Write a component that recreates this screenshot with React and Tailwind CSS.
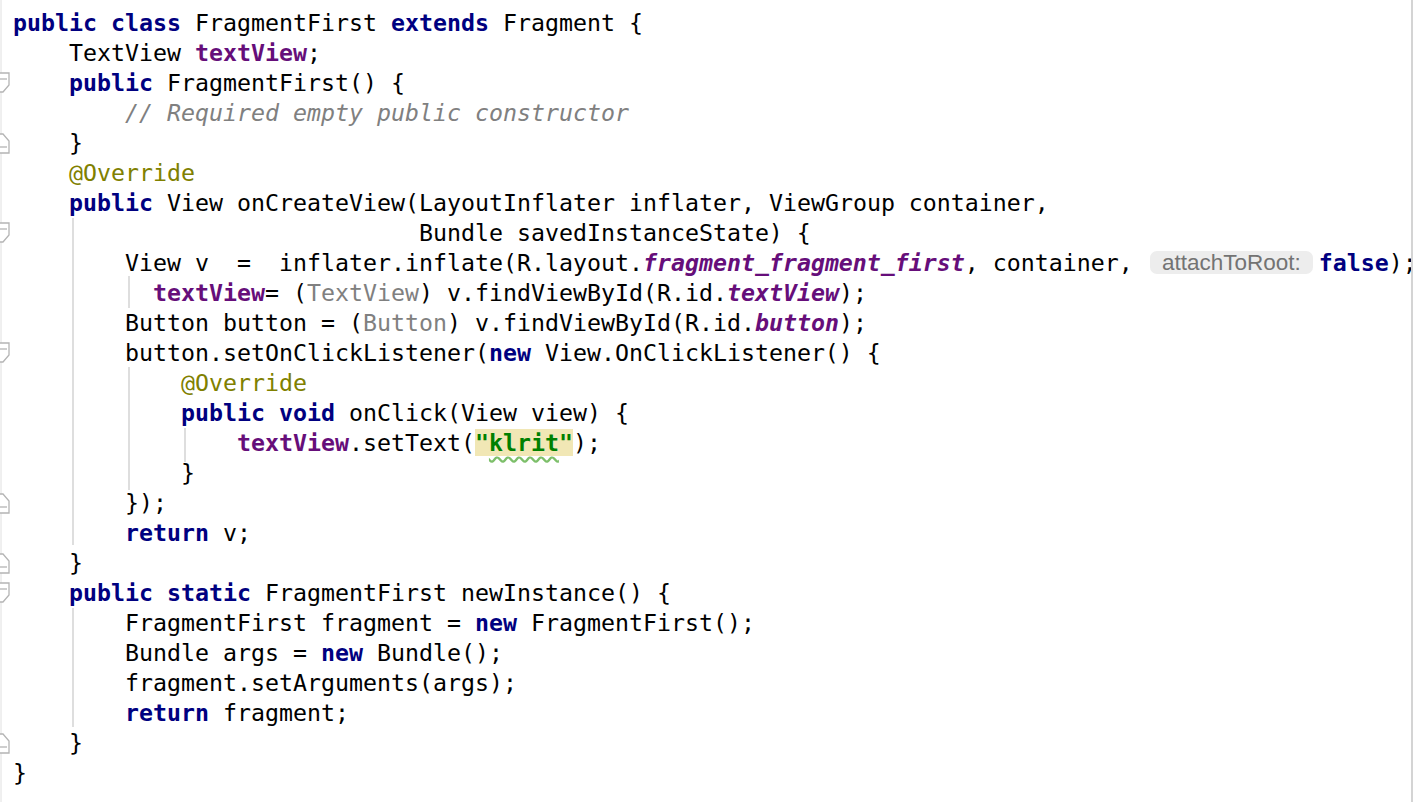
import React from 'react';

const KW = 'font-bold text-[#000080]';
const FIELD = 'font-bold text-[#660e7a]';
const SFIELD = 'font-bold italic text-[#660e7a]';
const COMMENT = 'italic text-[#808080]';
const ANN = 'text-[#808000]';
const CAST = 'text-[#808080]';

// each line: list of [text, className] or special tokens
const lines = [
  [['public', KW], ' ', ['class', KW], ' FragmentFirst ', ['extends', KW], ' Fragment {'],
  ['    TextView ', ['textView', FIELD], ';'],
  ['    ', ['public', KW], ' FragmentFirst() {'],
  ['        ', ['// Required empty public constructor', COMMENT]],
  ['    }'],
  ['    ', ['@Override', ANN]],
  ['    ', ['public', KW], ' View onCreateView(LayoutInflater inflater, ViewGroup container,'],
  ['                             Bundle savedInstanceState) {'],
  ['        View v  =  inflater.inflate(R.layout.', ['fragment_fragment_first', SFIELD], ', container, ', { hint: 'attachToRoot:' }, ['false', KW], ');'],
  ['          ', ['textView', FIELD], '= (', ['TextView', CAST], ') v.findViewById(R.id.', ['textView', SFIELD], ');'],
  ['        Button button = (', ['Button', CAST], ') v.findViewById(R.id.', ['button', SFIELD], ');'],
  ['        button.setOnClickListener(', ['new', KW], ' View.OnClickListener() {'],
  ['            ', ['@Override', ANN]],
  ['            ', ['public', KW], ' ', ['void', KW], ' onClick(View view) {'],
  ['                ', ['textView', FIELD], '.setText(', { str: 'klrit' }, ');'],
  ['            }'],
  ['        });'],
  ['        ', ['return', KW], ' v;'],
  ['    }'],
  ['    ', ['public', KW], ' ', ['static', KW], ' FragmentFirst newInstance() {'],
  ['        FragmentFirst fragment = ', ['new', KW], ' FragmentFirst();'],
  ['        Bundle args = ', ['new', KW], ' Bundle();'],
  ['        fragment.setArguments(args);'],
  ['        ', ['return', KW], ' fragment;'],
  ['    }'],
  ['}'],
];

// fold markers: line number (1-based) and direction
const folds = [
  [3, 'start'], [5, 'end'], [8, 'start'], [12, 'start'],
  [17, 'end'], [19, 'end'], [20, 'start'], [25, 'end'],
];

// indent guides relative to code column (x offset, top, bottom)
const guides = [
  [59, 218, 545],
  [115, 276, 308],
  [115, 367, 490],
  [171, 428, 462],
  [59, 608, 727],
];

function Token({ t }) {
  if (typeof t === 'string') return <span>{t}</span>;
  if (Array.isArray(t)) return <span className={t[1]}>{t[0]}</span>;
  if (t.hint)
    return (
      <span className="ml-[3px] mr-[6px] inline-block h-[23px] w-[163px] rounded-[7px] bg-[#ededed] text-center align-[1px] font-['Liberation_Sans',sans-serif] text-[22.5px] leading-[23px] text-[#737373]">
        {t.hint}
      </span>
    );
  if (t.str)
    return (
      <span className="bg-[#f1e7b5] font-bold text-[#008000]">
        "
        <span className="underline decoration-[#7dbf6a] decoration-wavy underline-offset-[5px]">{t.str}</span>
        "
      </span>
    );
  return null;
}

function Gutter() {
  return (
    <svg width="13" height="802" className="shrink-0">
      <line x1="1" y1="0" x2="1" y2="802" stroke="#e0e0e0" strokeWidth="1" />
      {folds.map(([n, dir]) => {
        const yc = 23 + (n - 1) * 30;
        const d =
          dir === 'start'
            ? `M-2 ${yc - 10} H9 V${yc + 2} L3 ${yc + 9} H-2`
            : `M-2 ${yc + 10} H9 V${yc - 2} L3 ${yc - 9} H-2`;
        const my = dir === 'start' ? yc - 4 : yc + 4;
        return (
          <g key={n}>
            <path d={d} fill="#ffffff" stroke="#b4b4b4" strokeWidth="1.3" />
            <line x1="0" y1={my} x2="7" y2={my} stroke="#b4b4b4" strokeWidth="1.3" />
          </g>
        );
      })}
    </svg>
  );
}

export default function App() {
  return (
    <div className="relative flex h-[802px] w-[1418px] overflow-hidden bg-white">
      <Gutter />
      <div className="relative flex-1 pt-[8px] font-['DejaVu_Sans_Mono',monospace] text-[23.25px] text-black">
        {guides.map(([x, top, bottom], i) => (
          <div
            key={i}
            className="absolute w-[1.5px] bg-[#dedede]"
            style={{ left: x, top, height: bottom - top }}
          />
        ))}
        {lines.map((toks, i) => (
          <div key={i} className="relative h-[30px] whitespace-pre leading-[30px]">
            {toks.map((t, j) => (
              <Token key={j} t={t} />
            ))}
          </div>
        ))}
      </div>
      <div className="absolute left-[1411px] top-0 h-full w-[2px] bg-[#d4d4d4]" />
    </div>
  );
}
